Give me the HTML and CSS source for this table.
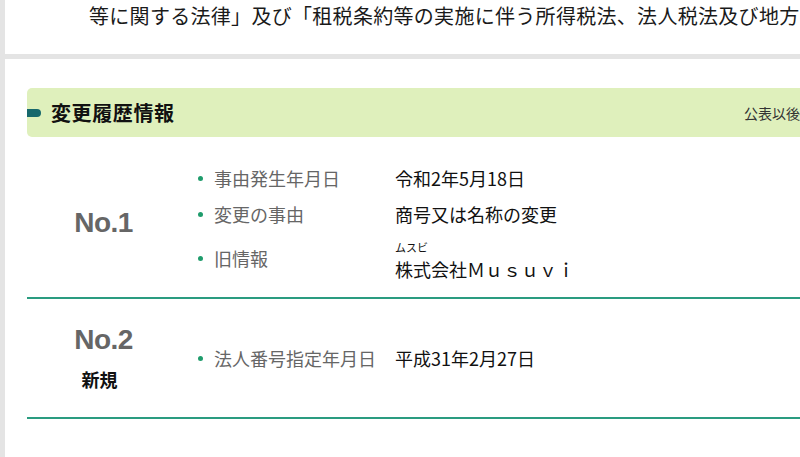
FILE: index.html
```html
<!DOCTYPE html>
<html lang="ja">
<head>
<meta charset="utf-8">
<link rel="stylesheet" href="styles.css">
</head>
<body>
<div class="page">
  <section class="card card-top">
    <p class="law-text">等に関する法律」及び「租税条約等の実施に伴う所得税法、法人税法及び地方</p>
  </section>
  <section class="card card-history">
    <div class="history-head">
      <span class="marker"></span>
      <h2 class="history-title">変更履歴情報</h2>
      <span class="history-note">公表以後</span>
    </div>
    <div class="history-row">
      <div class="row-no">
        <div class="no">No.1</div>
      </div>
      <ul class="items">
        <li class="item"><span class="label">事由発生年月日</span><span class="value">令和2年5月18日</span></li>
        <li class="item"><span class="label">変更の事由</span><span class="value">商号又は名称の変更</span></li>
        <li class="item"><span class="label">旧情報</span><span class="value"><span class="kana">ムスビ</span><span class="main">株式会社Ｍｕｓｕｖｉ</span></span></li>
      </ul>
    </div>
    <div class="history-row row-second">
      <div class="row-no">
        <div class="no">No.2</div>
        <div class="tag">新規</div>
      </div>
      <ul class="items">
        <li class="item"><span class="label">法人番号指定年月日</span><span class="value">平成31年2月27日</span></li>
      </ul>
    </div>
  </section>
</div>
</body>
</html>
```
FILE: styles.css
```css
html, body {
  margin: 0;
  padding: 0;
}
body {
  background: #e4e4e4;
  font-family: "Noto Sans CJK JP", "Noto Sans", sans-serif;
  overflow: hidden;
  width: 800px;
  height: 457px;
}
.page {
  padding-left: 5px;
  width: 795px;
  height: 457px;
  overflow: hidden;
}
.card {
  background: #fff;
}
.card-top {
  height: 54px;
  overflow: hidden;
}
.law-text {
  margin: 0;
  padding-left: 84px;
  font-size: 20px;
  line-height: 32px;
  color: #1a1a1a;
  white-space: nowrap;
  letter-spacing: 0.3px;
  overflow: hidden;
}
.card-history {
  margin-top: 5px;
  padding: 29px 0 0 22px;
  height: 398px;
  box-sizing: border-box;
  overflow: hidden;
}
.history-head {
  display: flex;
  align-items: center;
  height: 49px;
  background: #dff0bc;
  border-radius: 5px 0 0 5px;
  white-space: nowrap;
}
.marker {
  width: 14px;
  height: 8px;
  background: #17686c;
  border-radius: 0 4px 4px 0;
  margin-top: 1px;
}
.history-title {
  margin: 0 0 0 10px;
  font-size: 20px;
  font-weight: 700;
  color: #111;
  letter-spacing: 0.6px;
  flex: 1;
}
.history-note {
  font-size: 14px;
  color: #333;
  width: 56px;
  overflow: hidden;
}
.history-row {
  display: flex;
  align-items: center;
  margin-top: 11px;
  padding: 12px 0;
  border-bottom: 2px solid #2a9c80;
}
.row-second {
  margin-top: 0;
}
.row-no {
  width: 153px;
  display: flex;
  flex-direction: column;
  align-items: center;
}
.no {
  font-family: "Liberation Sans", Arial, sans-serif;
  font-weight: 700;
  font-size: 28px;
  line-height: 58px;
  color: #666;
  letter-spacing: -0.5px;
}
.tag {
  font-size: 18px;
  font-weight: 700;
  line-height: 26px;
  color: #111;
  margin-bottom: 13px;
  margin-top: -3px;
  margin-right: 8px;
}
.items {
  list-style: none;
  margin: 0;
  padding: 0 0 0 18px;
}
.item {
  display: flex;
  align-items: center;
  padding: 4.5px 0;
  min-height: 27px;
}
.label {
  position: relative;
  width: 181px;
  padding-left: 16px;
  font-size: 18px;
  line-height: 27px;
  color: #666;
}
.label::before {
  content: "";
  position: absolute;
  left: 0;
  top: 11px;
  width: 5px;
  height: 5px;
  border-radius: 50%;
  background: #1f9c6c;
}
.value {
  font-size: 18px;
  line-height: 27px;
  color: #111;
  display: flex;
  flex-direction: column;
}
.kana {
  font-size: 11px;
  line-height: 20px;
}
.main {
  line-height: 24px;
}
```
